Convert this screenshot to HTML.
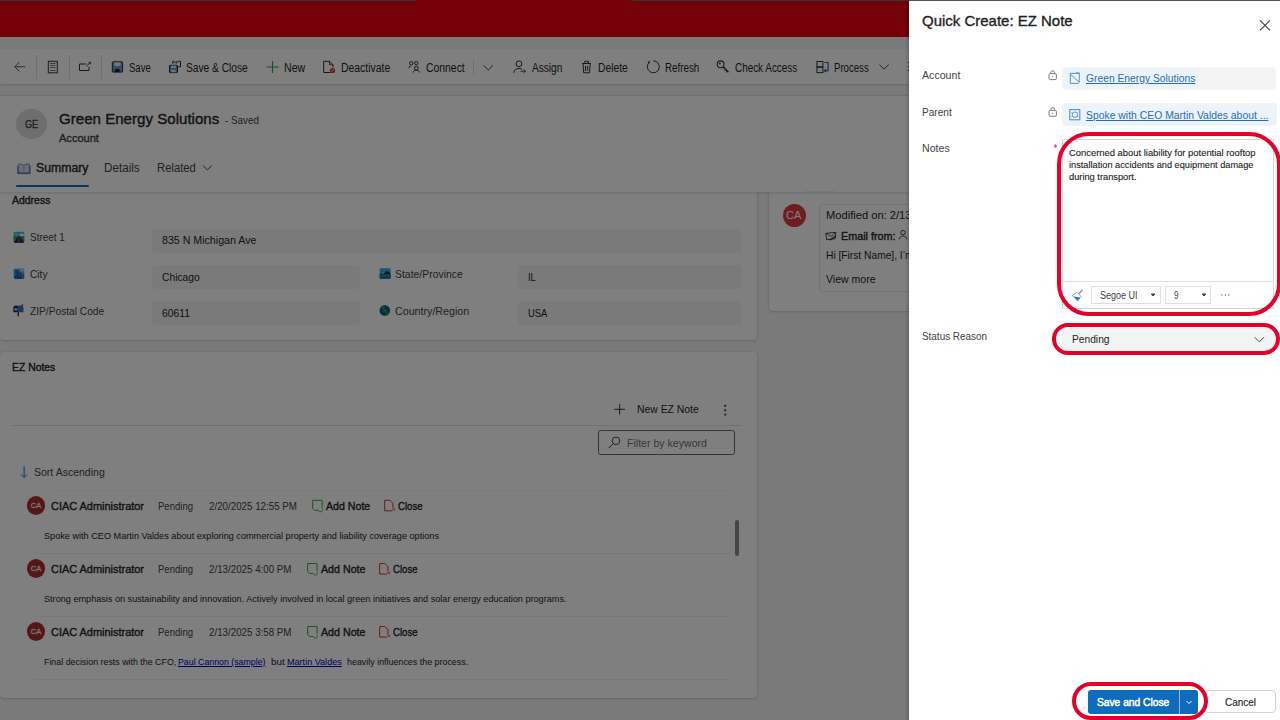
<!DOCTYPE html>
<html><head><meta charset="utf-8"><title>Green Energy Solutions</title>
<style>
html,body{margin:0;padding:0;width:1280px;height:720px;overflow:hidden;background:#f5f5f5;font-family:"Liberation Sans",sans-serif;}
.layer{position:absolute;left:0;top:0;width:1280px;height:720px;overflow:hidden}
.t{position:absolute;white-space:nowrap;transform-origin:0 50%;}
.a{position:absolute;box-sizing:border-box}
svg{position:absolute;overflow:visible}
.card{position:absolute;background:#fff;border-radius:4px;box-shadow:0 0 2px rgba(0,0,0,.12),0 1px 3px rgba(0,0,0,.14)}
.inp{position:absolute;background:#f5f5f5;border-radius:4px}
.sep{position:absolute;width:1px;background:#e0e0e0}
.hl{position:absolute;height:1px;background:#e6e6e6}
.av{position:absolute;border-radius:50%;background:#c4262e;color:#fff;font-weight:700;text-align:center}
.red{position:absolute;box-sizing:border-box;border:4px solid #e4002b}
</style></head><body>
<div class="layer" id="page">
  <!-- red header -->
  <div class="a" style="left:0;top:0;width:1280px;height:37px;background:#ea0010"></div>
  <div class="a" style="left:0;top:0;width:416px;height:1px;background:#6a6a6a"></div>
  <div class="a" style="left:631px;top:0;width:300px;height:1px;background:#6a6a6a"></div>
  <!-- command bar -->
  <div class="a" style="left:0;top:49px;width:1280px;height:35px;background:#fff;box-shadow:0 1px 2px rgba(0,0,0,.18)"></div>
  <div class="sep" style="left:36px;top:55px;height:24px"></div>
  <div class="sep" style="left:69px;top:55px;height:24px"></div>
  <div class="sep" style="left:101px;top:55px;height:24px"></div>
  <div class="sep" style="left:473px;top:59px;height:16px"></div>
  <!-- icons cmd -->
  <svg style="left:0;top:0" width="1280" height="90" fill="none" stroke="#424242" stroke-width="1">
    <!-- back -->
    <path d="M25.3 66.8H14.8M19.3 62.3l-4.5 4.5 4.5 4.5" stroke="#505050"/>
    <!-- form -->
    <rect x="48.3" y="61.3" width="9" height="11.5" stroke="#333"/><path d="M50 63.5h5.5M50 65.5h5.5M50 67.5h5.5M50 70.5h5.5" stroke="#555" stroke-width=".8"/>
    <!-- popout -->
    <path d="M86 64H79.5v6.5H89V67" stroke="#333"/><path d="M86.3 66.2L90.5 62.3" stroke="#333"/><path d="M88.5 62.3h2.2v2" stroke="#333" stroke-width=".8"/>
    <!-- save -->
    <rect x="112.3" y="61.8" width="10.3" height="10.3" rx=".8" fill="#5a9ad6" stroke="#2a2a2a"/><rect x="114.3" y="62.3" width="6.3" height="3.8" fill="#e8e8e8" stroke="none"/><rect x="115" y="69" width="4.5" height="3" fill="#222" stroke="none"/>
    <!-- save&close -->
    <rect x="169.5" y="65.3" width="8" height="7.3" rx=".6" fill="#5a9ad6" stroke="#2a2a2a"/><rect x="171.2" y="65.6" width="4.6" height="2.4" fill="#e8e8e8" stroke="none"/><rect x="171.2" y="69.8" width="4.6" height="2.5" fill="#e8e8e8" stroke="none"/>
    <path d="M172.8 63.8v-2.5h1.5M178 61.3h2.5v5.5h-2" stroke="#2a2a2a"/><path d="M174 62.3h3.5M176.3 61.2l1.2 1.1-1.2 1.1" stroke="#1a5da8"/>
    <!-- new -->
    <path d="M272.5 61v12M266.5 67h12" stroke="#2e9e4e" stroke-width="1.1"/>
    <!-- deactivate -->
    <path d="M330.5 72.5h-6.8V61.3h5.8l3.5 3.5v2.7" stroke="#333"/><path d="M329.5 61.3v3.5h3.5" stroke="#333" stroke-width=".8"/><circle cx="332.5" cy="70.5" r="2.6" fill="#d13438" stroke="none"/><path d="M331.3 71.7l2.4-2.4" stroke="#fff" stroke-width=".9"/>
    <!-- connect -->
    <circle cx="411.3" cy="63.2" r="1.7" stroke="#333"/><circle cx="416.3" cy="63.2" r="1.7" stroke="#333"/><path d="M409 68.2c0-1.5.8-2.3 2.3-2.3" stroke="#333"/><circle cx="416.3" cy="68.2" r="1.9" stroke="#333"/><path d="M413.2 72.5c.3-1.6 1.4-2.4 3.1-2.4s2.8.8 3.1 2.4" stroke="#333"/>
    <!-- chevron -->
    <path d="M483.5 65.4l4.75 4.5 4.75-4.5" stroke="#4a4a5a"/>
    <!-- assign -->
    <circle cx="519" cy="63.8" r="2.9" stroke="#333"/><path d="M513.7 72.8c.3-2.8 2.2-4.3 5.3-4.3 1.2 0 2.2.2 3 .7" stroke="#333"/><path d="M520.5 71.2h5M523.8 69.5l1.8 1.7-1.8 1.7" stroke="#1a5da8"/>
    <!-- delete -->
    <path d="M582 63.5h9M584.8 63.3v-2h3.6v2M583 63.5l.7 9.3h5.8l.7-9.3M585.5 65.8v5.2M587.7 65.8v5.2" stroke="#333"/>
    <!-- refresh -->
    <path d="M649.5 62.2a6 6 0 1 0 3.8-1.4" stroke="#333"/><path d="M648.5 60.7l1.2 1.6-1.9.9" stroke="#333"/>
    <!-- key -->
    <circle cx="720.6" cy="64.3" r="3.4" stroke="#333" stroke-width="1.1"/><circle cx="719.8" cy="63.5" r=".9" fill="#333" stroke="none"/><path d="M723.1 66.8l5.3 5.4" stroke="#333" stroke-width="1.6"/><path d="M725.6 69.4l-1.2 1.3M727.2 71l-1.2 1.3" stroke="#333" stroke-width="1"/>
    <!-- process -->
    <rect x="816.9" y="61.5" width="6" height="5.3" stroke="#333"/><rect x="816.9" y="67.3" width="6" height="5.3" stroke="#333"/><path d="M824.5 62.5h3.6v8.2h-3.7M825.9 69.2l-1.6 1.5 1.6 1.5" stroke="#1a5da8" stroke-width="1.1"/>
    <path d="M879.4 64.6l4.7 4.4 4.7-4.4" stroke="#4a4a5a"/>
    <path d="M908.5 62.1v.9M908.5 66.1v.9M908.5 70v.9" stroke-width="1.1" stroke="#333"/>
  </svg>
  <!-- header area -->
  <div class="a" style="left:0;top:95px;width:1280px;height:1px;background:#e8e8e8"></div>
  <!-- address card (top hidden under header) -->
  <div class="card" style="left:0;top:150px;width:757px;height:190px"></div>
  <div class="card" style="left:769px;top:150px;width:400px;height:161px"></div>
  <div class="card" style="left:0;top:352px;width:757px;height:346px"></div>
  <!-- header white -->
  <div class="a" style="left:0;top:96px;width:1280px;height:96px;background:#fff;box-shadow:0 1px 3px rgba(0,0,0,.16)"></div>
  <div class="av" style="left:16px;top:108.5px;width:30.5px;height:30.5px;background:#dcdcdc"></div>
  <div class="a" style="left:15.5px;top:184.5px;width:73px;height:2.5px;background:#0f6cbd;border-radius:1px"></div>
  <svg style="left:0;top:0" width="300" height="200" fill="none" stroke="#424242" stroke-width="1">
    <path d="M18.3 164.2c2.1-.3 4.1 0 5.6.9 1.5-.9 3.5-1.2 5.6-.9v8.3c-2.1-.3-4.1 0-5.6.9-1.5-.9-3.5-1.2-5.6-.9z" fill="#d8d8e6" stroke="#6a6a7a" stroke-width=".7"/><path d="M23.9 165.1v8.3" stroke="#8a8a9a" stroke-width=".6"/><path d="M17.8 166v7.6h12.2V166" stroke="#1a7fd0" stroke-width="1"/>
    <path d="M203 165.5l4.4 4.4 4.4-4.4"/>
  </svg>
  <!-- address inputs -->
  <div class="inp" style="left:152px;top:228.5px;width:590px;height:24px"></div>
  <div class="inp" style="left:152px;top:265px;width:208px;height:24px"></div>
  <div class="inp" style="left:518px;top:265px;width:224px;height:24px"></div>
  <div class="inp" style="left:152px;top:301px;width:208px;height:24px"></div>
  <div class="inp" style="left:518px;top:301px;width:224px;height:24px"></div>
  <svg style="left:0;top:0" width="500" height="340">
    <!-- street icon -->
    <defs><clipPath id="cs"><rect x="13.6" y="231.8" width="10.7" height="10.9" rx="1.6"/></clipPath><clipPath id="cc"><rect x="13.6" y="268.5" width="10.7" height="10.4" rx="1.6"/></clipPath><clipPath id="cst"><rect x="379.6" y="268.3" width="11.1" height="10.7" rx="1.4"/></clipPath></defs>
    <g clip-path="url(#cs)"><rect x="13" y="231" width="12" height="12" fill="#52b4e6"/><path d="M19.5 234.6c.8-1.3 2.6-1.5 3.6-.4l1.2.3v1.9h-5z" fill="#eef4f8"/><path d="M15 235l1.2-1 1.2 1z" fill="#eef4f8"/><rect x="13" y="236.3" width="12" height="7" fill="#2aa75a"/><path d="M13.4 243l4.9-6.7h1.3l4.9 6.7z" fill="#23245a"/><path d="M18.95 237.5v5.2" stroke="#e5c04a" stroke-width=".6"/></g>
    <!-- city -->
    <g clip-path="url(#cc)"><rect x="13" y="268" width="12" height="12" fill="#58b3e8"/><rect x="14.5" y="270" width="4" height="9" fill="#1f5fb8"/><rect x="18" y="272.5" width="3.5" height="6.5" fill="#2a4fa0"/><rect x="21" y="274" width="3.5" height="5" fill="#3a78c8"/><path d="M20.5 270.5h3" stroke="#d8eef8" stroke-width="1.3"/><rect x="15.3" y="271.5" width="1" height="1" fill="#9fd3f2"/><rect x="15.3" y="274" width="1" height="1" fill="#9fd3f2"/><rect x="19" y="274.5" width="1" height="1" fill="#9fd3f2"/></g>
    <!-- zip mailbox -->
    <path d="M13.3 312.3v-4.3a2.6 2.6 0 0 1 5.2 0v4.3z" fill="#26285e"/><rect x="14.5" y="308.4" width="2.8" height="2" fill="#e8e8f0"/><path d="M18.5 312.3v-4.3a2.6 2.6 0 0 0-2.6-2.6h5.1a2.6 2.6 0 0 1 2.5 2.6v4.3z" fill="#2f6fd0"/><rect x="21.3" y="304.4" width="2" height="2.2" fill="#e04050"/><rect x="17.6" y="312.3" width="1.4" height="3.9" fill="#5a3020"/>
    <!-- state -->
    <g clip-path="url(#cst)"><rect x="379" y="268" width="12" height="12" fill="#3fa9e0"/><path d="M379 274.5l2.5-1.6 2.2.6 3.4-2.8 3.4 2.6v1.6z" fill="#2a2a5e"/><path d="M380.2 273.7l1.3-.8 2.2.5.8-.7-1.6.1-1.2-.3z" fill="#f4f4f4"/><rect x="379" y="274.3" width="12" height="1.8" fill="#22a060"/><rect x="379" y="276.1" width="12" height="3" fill="#1c6fb8"/></g>
    <!-- country globe -->
    <circle cx="384.8" cy="310.4" r="5.3" fill="#1b4f9a"/><path d="M381.6 306.8c1.2-.9 2.6-1.2 3.6-1 .2.8-.3 1.6-1.2 2 .6.9 1.4 1.4 2.3 1.8.7.3.4 1.2.8 1.8.7.6 1.6.9 1.5 2-.3 1-.9 1.8-1.6 2.3-.5-.9-.4-2-1.3-2.6-.8-.6-2-.5-2.6-1.4-.6-1-.8-2.8-1.5-4.9z" fill="#1f9a4a"/>
  </svg>
  <!-- right card -->
  <div class="av" style="left:782.5px;top:203.75px;width:23px;height:23px;background:#e03a40"></div>
  <div class="a" style="left:818.5px;top:203.5px;width:200px;height:88px;border:1px solid #e6e6e6;border-radius:4px"></div>
  <svg style="left:0;top:0" width="910" height="300" fill="none" stroke="#424242" stroke-width="1">
    <path d="M825.8 233.3l10.2-1-1 6.5-8.4.8z" stroke="#333" stroke-width=".9"/><path d="M825.8 233.3l5.3 3.2 4.9-4.2" stroke="#333" stroke-width=".8"/><path d="M829.8 240.3l6.3-4.8" stroke="#333" stroke-width="1.2"/>
    <circle cx="903" cy="232.6" r="2.2" stroke="#333" stroke-width=".9"/><path d="M899.2 239.3c.2-2 1.7-3.3 3.8-3.3s3.6 1.3 3.8 3.3" stroke="#333" stroke-width=".9"/>
    <path d="M805 191.5h30" stroke="#e0e0e0" stroke-dasharray="2 1.5"/>
  </svg>
  <!-- EZ notes -->
  <div class="hl" style="left:12px;top:425px;width:730px;background:#e0e0e0"></div>
  <div class="a" style="left:598.2px;top:430.2px;width:137.3px;height:24.5px;border:1px solid #6a6a6a;border-radius:2.5px"></div>
  <div class="hl" style="left:57px;top:490px;width:674px;background:#f4f4f4"></div>
  <div class="hl" style="left:34px;top:553px;width:696px;background:#f0f0f0"></div>
  <div class="hl" style="left:34px;top:616px;width:696px;background:#f0f0f0"></div>
  <div class="hl" style="left:34px;top:678.5px;width:696px;background:#f0f0f0"></div>
  <div class="a" style="left:735px;top:520px;width:4px;height:36px;background:#8a8a8a;border-radius:2px"></div>
  <svg style="left:0;top:0" width="760" height="700" fill="none" stroke="#424242" stroke-width="1">
    <path d="M625 409.3h-10.7M619.65 404v10.6" stroke="#333"/>
    <circle cx="725.2" cy="405.8" r=".7" fill="#424242"/><circle cx="725.2" cy="410.2" r=".7" fill="#424242"/><circle cx="725.2" cy="414.6" r=".7" fill="#424242"/>
    <circle cx="616" cy="440.8" r="3.8"/><path d="M613.2 443.6l-4.5 4.6"/>
    <path d="M24.1 466.3v11.2M20.9 474.3l3.2 3.2 3.2-3.2" stroke="#1a6fc0"/>
    <g><path d="M312.7 508.3v-8h9.4v7.3" stroke="#3d9f50"/><path d="M312.7 508.3l2 2h3.3" stroke="#3d9f50"/><path d="M322 508.5a2 2 0 1 1-3.5 1.3" stroke="#3d9f50" stroke-width=".9"/>
    <path d="M392 510.8h-7.3V500.3h5.2l3 3v4.5" stroke="#d13438"/><path d="M392.5 508.2l2.5 2.5M395 508.2l-2.5 2.5" stroke="#d13438" stroke-width=".9"/></g>
    <g transform="translate(-5 63.25)"><path d="M312.7 508.3v-8h9.4v7.3" stroke="#3d9f50"/><path d="M312.7 508.3l2 2h3.3" stroke="#3d9f50"/><path d="M322 508.5a2 2 0 1 1-3.5 1.3" stroke="#3d9f50" stroke-width=".9"/>
    <path d="M392 510.8h-7.3V500.3h5.2l3 3v4.5" stroke="#d13438"/><path d="M392.5 508.2l2.5 2.5M395 508.2l-2.5 2.5" stroke="#d13438" stroke-width=".9"/></g>
    <g transform="translate(-5 126.25)"><path d="M312.7 508.3v-8h9.4v7.3" stroke="#3d9f50"/><path d="M312.7 508.3l2 2h3.3" stroke="#3d9f50"/><path d="M322 508.5a2 2 0 1 1-3.5 1.3" stroke="#3d9f50" stroke-width=".9"/>
    <path d="M392 510.8h-7.3V500.3h5.2l3 3v4.5" stroke="#d13438"/><path d="M392.5 508.2l2.5 2.5M395 508.2l-2.5 2.5" stroke="#d13438" stroke-width=".9"/></g>
  </svg>
  <div class="av" style="left:26.9px;top:496.1px;width:18.3px;height:18.6px;background:#ac2a30;font-size:7.5px;line-height:20px;font-weight:400;-webkit-text-stroke:.3px #f4e4e4;color:#f4e4e4">CA</div>
  <div class="av" style="left:26.9px;top:559.4px;width:18.3px;height:18.6px;background:#ac2a30;font-size:7.5px;line-height:20px;font-weight:400;-webkit-text-stroke:.3px #f4e4e4;color:#f4e4e4">CA</div>
  <div class="av" style="left:26.9px;top:622.4px;width:18.3px;height:18.6px;background:#ac2a30;font-size:7.5px;line-height:20px;font-weight:400;-webkit-text-stroke:.3px #f4e4e4;color:#f4e4e4">CA</div>
  <div class="t" style="left:786px;top:209px;font-size:11px;line-height:12px;color:#fff">CA</div>
  <span class="t" style="left:128.75px;top:62.42px;font-size:12px;line-height:12px;font-weight:400;color:#242424;transform:scaleX(0.7950);">Save</span>
<span class="t" style="left:186.25px;top:62.42px;font-size:12px;line-height:12px;font-weight:400;color:#242424;transform:scaleX(0.8493);">Save &amp; Close</span>
<span class="t" style="left:283.75px;top:62.42px;font-size:12px;line-height:12px;font-weight:400;color:#242424;transform:scaleX(0.8848);">New</span>
<span class="t" style="left:340.75px;top:62.42px;font-size:12px;line-height:12px;font-weight:400;color:#242424;transform:scaleX(0.8686);">Deactivate</span>
<span class="t" style="left:425.75px;top:62.42px;font-size:12px;line-height:12px;font-weight:400;color:#242424;transform:scaleX(0.8668);">Connect</span>
<span class="t" style="left:531.75px;top:62.42px;font-size:12px;line-height:12px;font-weight:400;color:#242424;transform:scaleX(0.8395);">Assign</span>
<span class="t" style="left:598.25px;top:62.42px;font-size:12px;line-height:12px;font-weight:400;color:#242424;transform:scaleX(0.8577);">Delete</span>
<span class="t" style="left:664.50px;top:62.42px;font-size:12px;line-height:12px;font-weight:400;color:#242424;transform:scaleX(0.8149);">Refresh</span>
<span class="t" style="left:734.90px;top:62.42px;font-size:12px;line-height:12px;font-weight:400;color:#242424;transform:scaleX(0.8252);">Check Access</span>
<span class="t" style="left:833.70px;top:62.42px;font-size:12px;line-height:12px;font-weight:400;color:#242424;transform:scaleX(0.8003);">Process</span>
<span class="t" style="left:25.20px;top:118.86px;font-size:10.5px;line-height:10.5px;font-weight:400;color:#424242;-webkit-text-stroke:0.35px #424242;transform:scaleX(0.8634);">GE</span>
<span class="t" style="left:59.10px;top:110.95px;font-size:15px;line-height:15px;font-weight:400;color:#242424;-webkit-text-stroke:0.35px #242424;transform:scaleX(1.0065);">Green Energy Solutions</span>
<span class="t" style="left:225.30px;top:114.95px;font-size:10.5px;line-height:10.5px;font-weight:400;color:#424242;transform:scaleX(0.9368);">- Saved</span>
<span class="t" style="left:59.00px;top:133.21px;font-size:11px;line-height:11px;font-weight:400;color:#424242;-webkit-text-stroke:0.35px #424242;transform:scaleX(1.0038);">Account</span>
<span class="t" style="left:35.70px;top:162.28px;font-size:12.5px;line-height:12.5px;font-weight:400;color:#242424;-webkit-text-stroke:0.35px #242424;transform:scaleX(0.9816);">Summary</span>
<span class="t" style="left:103.90px;top:162.28px;font-size:12.5px;line-height:12.5px;font-weight:400;color:#424242;transform:scaleX(0.9341);">Details</span>
<span class="t" style="left:156.90px;top:162.28px;font-size:12.5px;line-height:12.5px;font-weight:400;color:#424242;transform:scaleX(0.9027);">Related</span>
<span class="t" style="left:11.80px;top:195.45px;font-size:10.5px;line-height:10.5px;font-weight:400;color:#242424;-webkit-text-stroke:0.35px #242424;transform:scaleX(0.9966);">Address</span>
<span class="t" style="left:29.60px;top:232.01px;font-size:11px;line-height:11px;font-weight:400;color:#424242;transform:scaleX(0.9032);">Street 1</span>
<span class="t" style="left:161.60px;top:234.81px;font-size:11px;line-height:11px;font-weight:400;color:#242424;transform:scaleX(0.9668);">835 N Michigan Ave</span>
<span class="t" style="left:29.60px;top:269.01px;font-size:11px;line-height:11px;font-weight:400;color:#424242;transform:scaleX(0.9233);">City</span>
<span class="t" style="left:161.60px;top:272.01px;font-size:11px;line-height:11px;font-weight:400;color:#242424;transform:scaleX(0.9341);">Chicago</span>
<span class="t" style="left:395.10px;top:269.01px;font-size:11px;line-height:11px;font-weight:400;color:#424242;transform:scaleX(0.9476);">State/Province</span>
<span class="t" style="left:527.80px;top:272.01px;font-size:11px;line-height:11px;font-weight:400;color:#242424;transform:scaleX(0.8490);">IL</span>
<span class="t" style="left:29.60px;top:305.71px;font-size:11px;line-height:11px;font-weight:400;color:#424242;transform:scaleX(0.9264);">ZIP/Postal Code</span>
<span class="t" style="left:161.60px;top:308.31px;font-size:11px;line-height:11px;font-weight:400;color:#242424;transform:scaleX(0.9402);">60611</span>
<span class="t" style="left:395.10px;top:305.71px;font-size:11px;line-height:11px;font-weight:400;color:#424242;transform:scaleX(0.9707);">Country/Region</span>
<span class="t" style="left:527.80px;top:308.31px;font-size:11px;line-height:11px;font-weight:400;color:#242424;transform:scaleX(0.8530);">USA</span>
<span class="t" style="left:825.50px;top:209.61px;font-size:11px;line-height:11px;font-weight:400;color:#242424;transform:scaleX(1.0131);">Modified on: 2/13</span>
<span class="t" style="left:840.50px;top:230.61px;font-size:11px;line-height:11px;font-weight:400;color:#242424;-webkit-text-stroke:0.35px #242424;transform:scaleX(0.9798);">Email from:</span>
<span class="t" style="left:825.50px;top:249.61px;font-size:11px;line-height:11px;font-weight:400;color:#242424;transform:scaleX(0.9296);">Hi [First Name], I&#8217;m</span>
<span class="t" style="left:825.50px;top:274.31px;font-size:11px;line-height:11px;font-weight:400;color:#242424;transform:scaleX(0.9562);">View more</span>
<span class="t" style="left:11.75px;top:362.16px;font-size:10.5px;line-height:10.5px;font-weight:400;color:#242424;-webkit-text-stroke:0.35px #242424;transform:scaleX(0.9882);">EZ Notes</span>
<span class="t" style="left:637.00px;top:404.31px;font-size:11px;line-height:11px;font-weight:400;color:#242424;transform:scaleX(0.9439);">New EZ Note</span>
<span class="t" style="left:626.75px;top:438.11px;font-size:11px;line-height:11px;font-weight:400;color:#707070;transform:scaleX(0.9622);">Filter by keyword</span>
<span class="t" style="left:33.75px;top:466.81px;font-size:11px;line-height:11px;font-weight:400;color:#424242;transform:scaleX(0.9561);">Sort Ascending</span>
<span class="t" style="left:51.25px;top:500.61px;font-size:11px;line-height:11px;font-weight:400;color:#242424;-webkit-text-stroke:0.35px #242424;transform:scaleX(0.9943);">CIAC Administrator</span>
<span class="t" style="left:158.25px;top:500.61px;font-size:11px;line-height:11px;font-weight:400;color:#424242;transform:scaleX(0.8669);">Pending</span>
<span class="t" style="left:208.75px;top:500.61px;font-size:11px;line-height:11px;font-weight:400;color:#424242;transform:scaleX(0.8882);">2/20/2025 12:55 PM</span>
<span class="t" style="left:325.75px;top:500.61px;font-size:11px;line-height:11px;font-weight:400;color:#242424;-webkit-text-stroke:0.35px #242424;transform:scaleX(0.9646);">Add Note</span>
<span class="t" style="left:397.50px;top:500.61px;font-size:11px;line-height:11px;font-weight:400;color:#242424;-webkit-text-stroke:0.35px #242424;transform:scaleX(0.8711);">Close</span>
<span class="t" style="left:51.25px;top:563.86px;font-size:11px;line-height:11px;font-weight:400;color:#242424;-webkit-text-stroke:0.35px #242424;transform:scaleX(0.9943);">CIAC Administrator</span>
<span class="t" style="left:158.25px;top:563.86px;font-size:11px;line-height:11px;font-weight:400;color:#424242;transform:scaleX(0.8669);">Pending</span>
<span class="t" style="left:208.75px;top:563.86px;font-size:11px;line-height:11px;font-weight:400;color:#424242;transform:scaleX(0.8874);">2/13/2025 4:00 PM</span>
<span class="t" style="left:320.50px;top:563.86px;font-size:11px;line-height:11px;font-weight:400;color:#242424;-webkit-text-stroke:0.35px #242424;transform:scaleX(0.9700);">Add Note</span>
<span class="t" style="left:392.50px;top:563.86px;font-size:11px;line-height:11px;font-weight:400;color:#242424;-webkit-text-stroke:0.35px #242424;transform:scaleX(0.8711);">Close</span>
<span class="t" style="left:51.25px;top:626.86px;font-size:11px;line-height:11px;font-weight:400;color:#242424;-webkit-text-stroke:0.35px #242424;transform:scaleX(0.9943);">CIAC Administrator</span>
<span class="t" style="left:158.25px;top:626.86px;font-size:11px;line-height:11px;font-weight:400;color:#424242;transform:scaleX(0.8669);">Pending</span>
<span class="t" style="left:208.75px;top:626.86px;font-size:11px;line-height:11px;font-weight:400;color:#424242;transform:scaleX(0.8874);">2/13/2025 3:58 PM</span>
<span class="t" style="left:320.50px;top:626.86px;font-size:11px;line-height:11px;font-weight:400;color:#242424;-webkit-text-stroke:0.35px #242424;transform:scaleX(0.9700);">Add Note</span>
<span class="t" style="left:392.50px;top:626.86px;font-size:11px;line-height:11px;font-weight:400;color:#242424;-webkit-text-stroke:0.35px #242424;transform:scaleX(0.8711);">Close</span>
<span class="t" style="left:43.75px;top:531.54px;font-size:9.3px;line-height:9.3px;font-weight:400;color:#242424;transform:scaleX(0.9829);">Spoke with CEO Martin Valdes about exploring commercial property and liability coverage options</span>
<span class="t" style="left:43.75px;top:594.94px;font-size:9.3px;line-height:9.3px;font-weight:400;color:#242424;transform:scaleX(0.9806);">Strong emphasis on sustainability and innovation. Actively involved in local green initiatives and solar energy education programs.</span>
<span class="t" style="left:43.75px;top:657.94px;font-size:9.3px;line-height:9.3px;font-weight:400;color:#242424;transform:scaleX(0.9514);">Final decision rests with the CFO,</span>
<span class="t" style="left:178.25px;top:657.94px;font-size:9.3px;line-height:9.3px;font-weight:400;color:#0000cc;text-decoration:underline;transform:scaleX(0.9458);">Paul Cannon (sample)</span>
<span class="t" style="left:270.75px;top:657.94px;font-size:9.3px;line-height:9.3px;font-weight:400;color:#242424;transform:scaleX(1.0628);">but</span>
<span class="t" style="left:287.00px;top:657.94px;font-size:9.3px;line-height:9.3px;font-weight:400;color:#0000cc;text-decoration:underline;transform:scaleX(0.9750);">Martin Valdes</span>
<span class="t" style="left:347.00px;top:657.94px;font-size:9.3px;line-height:9.3px;font-weight:400;color:#242424;transform:scaleX(0.9572);">heavily influences the process.</span>
</div>
<!-- overlay -->
<div class="a" style="left:0;top:0;width:1280px;height:720px;background:rgba(0,0,0,.5)"></div>
<!-- quick create panel -->
<div class="a" style="left:909px;top:0;width:371px;height:720px;background:#fff;box-shadow:-1px 0 3px rgba(0,0,0,.25)"></div>
<div class="layer">
  <div class="a" style="left:909px;top:0;width:371px;height:1px;background:#555"></div>
  <svg style="left:0;top:0" width="1280" height="720" fill="none" stroke="#424242" stroke-width="1">
    <path d="M1260 20.3l10 10M1270 20.3l-10 10" stroke-width="1.2"/>
    <rect x="1049" y="73.6" width="7.4" height="6" rx="1.3" stroke="#6e6e6e" stroke-width=".9"/><path d="M1050.9 73.6v-1a1.8 1.8 0 0 1 3.6 0v1" stroke="#6e6e6e" stroke-width=".9"/><circle cx="1052.7" cy="76.6" r=".55" fill="#6e6e6e" stroke="none"/>
    <rect x="1049" y="110.3" width="7.4" height="6" rx="1.3" stroke="#6e6e6e" stroke-width=".9"/><path d="M1050.9 110.3v-1a1.8 1.8 0 0 1 3.6 0v1" stroke="#6e6e6e" stroke-width=".9"/><circle cx="1052.7" cy="113.3" r=".55" fill="#6e6e6e" stroke="none"/>
  </svg>
  <div class="a" style="left:1062px;top:66.5px;width:214px;height:23.5px;background:#f3f3f3;border-radius:4px"></div>
  <div class="a" style="left:1064.5px;top:69.2px;width:133.5px;height:18.4px;background:#ebf3fc;border-radius:3px"></div>
  <div class="a" style="left:1062px;top:103.3px;width:214.8px;height:23.1px;background:#f3f3f3;border-radius:4px"></div>
  <div class="a" style="left:1064.5px;top:105.7px;width:211.5px;height:18.9px;background:#ebf3fc;border-radius:3px"></div>
  <svg style="left:0;top:0" width="1280" height="720" fill="none" stroke="#115ea3" stroke-width="1">
    <path d="M1078.3 83.4h-8V73.4h9v8.8z" stroke="#4a86c8" stroke-width=".9"/><path d="M1070.3 74.2l8.8 7.8" stroke="#4a86c8" stroke-width=".9"/><path d="M1076.3 73.4v-.6h2.8v1.2" stroke="#4a86c8" stroke-width=".8"/>
    <rect x="1069.8" y="109.6" width="10" height="10.2" stroke="#4a86c8" stroke-width="1"/><path d="M1072.2 114.7c0-1.6 1.3-2.7 2.7-2.7s2.7 1.1 2.7 2.7-1.3 2.7-2.7 2.7-2.7-1.1-2.7-2.7z" stroke="#4a86c8" stroke-width=".9"/><path d="M1071.5 112.5l1.4.9M1078.3 112.5l-1.4.9M1071.5 116.9l1.4-.9M1078.3 116.9l-1.4-.9" stroke="#4a86c8" stroke-width=".8"/>
  </svg>
  <!-- notes box -->
  <svg style="left:0;top:0" width="1280" height="720" stroke="#d13438" stroke-width=".65"><path d="M1055.4 144v4.2M1053.6 145.1l3.6 2M1053.6 147.1l3.6-2"/></svg>
  <div class="a" style="left:1062px;top:139.2px;width:212px;height:170.3px;border:1px solid #d6d6d6"></div>
  <div class="a" style="left:1063px;top:280.5px;width:210px;height:1px;background:#e0e0e0"></div>
  <div class="a" style="left:1091.4px;top:286.2px;width:69.4px;height:17.4px;border:1px solid #e0e0e0"></div>
  <div class="a" style="left:1165.3px;top:286.2px;width:46.1px;height:17.4px;border:1px solid #e0e0e0"></div>
  <svg style="left:0;top:0" width="1280" height="720" fill="none" stroke="#424242" stroke-width="1">
    <path d="M1151.3 294l1.8 2 1.8-2z" fill="#424242"/>
    <path d="M1202.2 294l1.8 2 1.8-2z" fill="#424242"/>
    <rect x="1221.4" y="294.2" width="1.1" height="1.5" fill="#808080" stroke="none"/><rect x="1224.9" y="294.2" width="1.1" height="1.5" fill="#707070" stroke="none"/><rect x="1228.2" y="294.2" width="1.1" height="1.5" fill="#707070" stroke="none"/>
    <path d="M1078.6 293.8l3.9-3.6" stroke="#8a8a8a" stroke-width="1.7"/><path d="M1078.6 293.8l3.9-3.6" stroke="#e8e8e8" stroke-width=".5"/>
    <path d="M1072.3 295.3l4.7-2.9 4.1 4.1-3.6 4.3z" fill="#fff" stroke="#8a8a8a" stroke-width=".8"/><path d="M1073.6 296.4l6.6 1-2.7 3.1z" fill="#1f74db" stroke="none"/>
  </svg>
  <!-- status -->
  <div class="a" style="left:1061.6px;top:327.75px;width:214.4px;height:23.25px;background:#f3f3f3;border-radius:4px"></div>
  <svg style="left:0;top:0" width="1280" height="720" fill="none" stroke="#424242" stroke-width="1">
    <path d="M1254.7 337.2l4.65 4.65 4.65-4.65"/>
  </svg>
  <!-- buttons -->
  <div class="a" style="left:1087.5px;top:689.8px;width:110.5px;height:24px;background:#0f6cbd;border-radius:3px"></div>
  <div class="a" style="left:1179px;top:689.8px;width:1px;height:24px;background:#8fb8e0"></div>
  <svg style="left:0;top:0" width="1280" height="720" fill="none" stroke="#fff" stroke-width="1">
    <path d="M1186.5 701l2.5 2.5 2.5-2.5"/>
  </svg>
  <div class="a" style="left:1204.4px;top:690px;width:71.8px;height:23.3px;border:1px solid #d1d1d1;border-radius:4px"></div>
  <span class="t" style="left:922.20px;top:13.15px;font-size:15px;line-height:15px;font-weight:400;color:#242424;-webkit-text-stroke:0.35px #242424;transform:scaleX(0.9987);">Quick Create: EZ Note</span>
<span class="t" style="left:921.70px;top:69.81px;font-size:11px;line-height:11px;font-weight:400;color:#424242;transform:scaleX(0.9660);">Account</span>
<span class="t" style="left:921.70px;top:106.81px;font-size:11px;line-height:11px;font-weight:400;color:#424242;transform:scaleX(0.9160);">Parent</span>
<span class="t" style="left:921.70px;top:143.31px;font-size:11px;line-height:11px;font-weight:400;color:#424242;transform:scaleX(0.9635);">Notes</span>
<span class="t" style="left:921.60px;top:331.01px;font-size:11px;line-height:11px;font-weight:400;color:#424242;transform:scaleX(0.9008);">Status Reason</span>
<span class="t" style="left:1086.20px;top:73.31px;font-size:11px;line-height:11px;font-weight:400;color:#2a6cb0;text-decoration:underline;transform:scaleX(0.9358);">Green Energy Solutions</span>
<span class="t" style="left:1086.20px;top:109.81px;font-size:11px;line-height:11px;font-weight:400;color:#2a6cb0;text-decoration:underline;transform:scaleX(0.9451);">Spoke with CEO Martin Valdes about ...</span>
<span class="t" style="left:1068.50px;top:148.94px;font-size:9.3px;line-height:9.3px;font-weight:400;color:#1a1a1a;-webkit-text-stroke:0.1px #1a1a1a;transform:scaleX(1.0108);">Concerned about liability for potential rooftop</span>
<span class="t" style="left:1068.50px;top:160.74px;font-size:9.3px;line-height:9.3px;font-weight:400;color:#1a1a1a;-webkit-text-stroke:0.1px #1a1a1a;transform:scaleX(0.9916);">installation accidents and equipment damage</span>
<span class="t" style="left:1068.50px;top:172.94px;font-size:9.3px;line-height:9.3px;font-weight:400;color:#1a1a1a;-webkit-text-stroke:0.1px #1a1a1a;transform:scaleX(0.9970);">during transport.</span>
<span class="t" style="left:1100.00px;top:290.50px;font-size:10px;line-height:10px;font-weight:400;color:#424242;transform:scaleX(0.9016);">Segoe UI</span>
<span class="t" style="left:1174.00px;top:290.50px;font-size:10px;line-height:10px;font-weight:400;color:#424242;transform:scaleX(0.8090);">9</span>
<span class="t" style="left:1071.90px;top:333.91px;font-size:11px;line-height:11px;font-weight:400;color:#242424;transform:scaleX(0.9288);">Pending</span>
<span class="t" style="left:1097.30px;top:696.91px;font-size:11px;line-height:11px;font-weight:400;color:#ffffff;-webkit-text-stroke:0.5px #ffffff;transform:scaleX(0.9296);">Save and Close</span>
<span class="t" style="left:1225.00px;top:696.91px;font-size:11px;line-height:11px;font-weight:400;color:#242424;-webkit-text-stroke:0.15px #242424;transform:scaleX(0.9051);">Cancel</span>
  <!-- red outlines -->
  <div class="red" style="left:1057px;top:132.2px;width:223.5px;height:183.8px;border-radius:32px"></div>
  <div class="red" style="left:1052.2px;top:323.4px;width:227.4px;height:31.9px;border-radius:16px"></div>
  <div class="red" style="left:1072.4px;top:682.4px;width:135.4px;height:37.4px;border-radius:19px"></div>
</div>
</body></html>
